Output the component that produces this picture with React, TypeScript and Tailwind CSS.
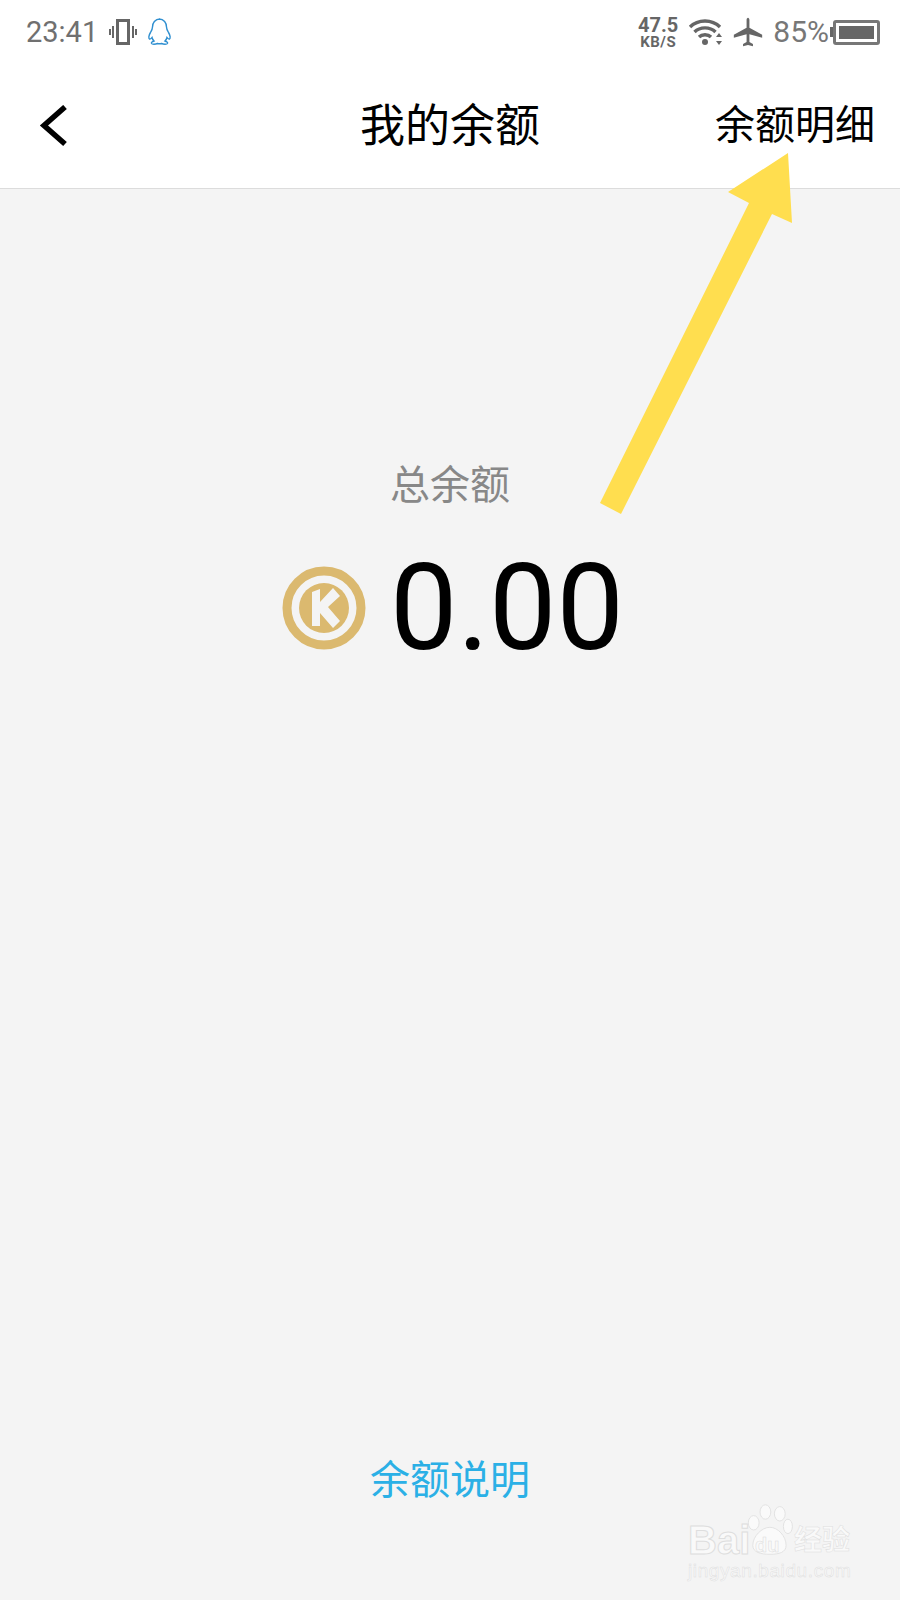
const cjk = "font-['Roboto','Noto_Sans_CJK_SC',sans-serif]";

const StatusBar = () => (
  <div className="h-[64px] flex items-center justify-between pl-[26px] pr-[20px] text-[#6b6b6b]">
    <div className="flex items-center">
      <span className="text-[29px] leading-none font-['Roboto',sans-serif] text-[#707070]">23:41</span>
      <svg width="28" height="26" viewBox="0 0 28 26" className="ml-[11px]" fill="none" stroke="#666">
        <rect x="8.5" y="1.5" width="11" height="23" strokeWidth="3" />
        <path d="M4 7v12M1 10v6M24 7v12M27 10v6" strokeWidth="2" />
      </svg>
      <svg width="26" height="28" viewBox="0 0 26 28" className="ml-[10px]" fill="none" stroke="#2f8fd0" strokeWidth="1.4">
        <path d="M13 1c-5 0-7.500 4-7.500 8 0 2-.5 3-2 5.500-2 3-2 6-1 6.500s2-1 2.500-1.500c.3 1.500 1 2.500 2 3.500-1.500.5-3 1.500-2.500 2.500.5.900 4 .9 6 0 1 .3 3 .3 4 0 2 .9 5.500.9 6 0 .5-1-1-2-2.500-2.500 1-1 1.700-2 2-3.500.5.500 1.500 2 2.500 1.500s1-3.500-1-6.500c-1.500-2.500-2-3.500-2-5.500 0-4-2.500-8-7.500-8z" />
      </svg>
    </div>
    <div className="flex items-center">
      <div className="flex flex-col items-center font-['Roboto',sans-serif] font-bold text-[#666] leading-none">
        <span className="text-[20px] leading-[19px]">47.5</span>
        <span className="text-[15px] leading-[14px] tracking-[0.5px]">KB/S</span>
      </div>
      <svg width="36" height="28" viewBox="0 0 36 28" className="ml-[10px]" fill="none" stroke="#666" strokeWidth="3.400">
        <path d="M2 9c8-8 22-8 30 0M6.500 14c5.500-5.500 15.500-5.500 21 0M11 19c3-3 9-3 12 0" />
        <circle cx="17" cy="24" r="3" fill="#666" stroke="none" />
        <path d="M31 15l-3 4h6zM31 27l-3-4h6z" fill="#666" stroke="none" />
      </svg>
      <svg width="34" height="34" viewBox="0 0 24 24" className="ml-[7px]" fill="#666">
        <path d="M22 16v-2l-9-5V3.500C13 2.700 12.500 2 12 2s-1 .7-1 1.500V9l-9 5v2l9-2.500V19l-2.500 1.500V22l3.500-.8 3.500.8v-1.500L13 19v-5.500l9 2.500z" />
      </svg>
      <span className="ml-[8px] text-[30px] leading-none font-['Roboto',sans-serif] text-[#777]">85%</span>
      <div className="ml-[1px] w-[3px] h-[10px] bg-[#666]" />
      <div className="w-[47px] h-[25px] border-[3px] border-[#777] rounded-[3px] p-[3px] flex">
        <div className="w-full bg-[#666]" />
      </div>
    </div>
  </div>
);

const Header = () => (
  <div className={`relative h-[125px] flex items-center justify-center border-b border-[#dcdcdc] bg-white ${cjk}`}>
    <svg width="32" height="42" viewBox="0 0 32 42" className="absolute left-[38px] top-[41px]" fill="none" stroke="#000" strokeWidth="5.500">
      <path d="M27 2L6 20.500 27 39" />
    </svg>
    <span className="text-[45px] leading-none text-black">我的余额</span>
    <span className="absolute right-[25px] top-[42px] text-[40px] leading-none text-black">余额明细</span>
  </div>
);

const Coin = () => (
  <svg width="84" height="84" viewBox="0 0 84 84">
    <circle cx="42" cy="42" r="37" fill="none" stroke="#dbb96f" strokeWidth="9" />
    <circle cx="42" cy="42" r="25" fill="#dbb96f" />
    <path d="M30 26L38 23V36L51 22L58 30L46 41L58 55L51 62L38 47V60L30 60z" fill="#f4f4f4" />
  </svg>
);

const Watermark = () => (
  <div className="absolute left-[688px] top-[1500px] w-[170px] font-['Liberation_Sans',sans-serif] text-[#f9f9f9]">
    <div className="flex items-end h-[60px] relative">
      <span className="text-[40px] leading-[40px] font-bold [-webkit-text-stroke:1px_#dedede]">Bai</span>
      <svg width="50" height="54" viewBox="0 0 52 60" className="absolute left-[56px] top-[3px]" fill="#fafafa" stroke="#e0e0e0" strokeWidth="1">
        <ellipse cx="22" cy="10" rx="6" ry="8" />
        <ellipse cx="38" cy="12" rx="6" ry="8" />
        <ellipse cx="9" cy="22" rx="6" ry="8" />
        <ellipse cx="47" cy="26" rx="5" ry="8" />
        <path d="M27 27c9 0 18 10 18 20 0 8-8 10-18 10S8 55 8 47c0-10 10-20 19-20z" />
      </svg>
      <span className="absolute left-[67px] top-[35px] text-[20px] leading-none font-bold [-webkit-text-stroke:0.5px_#dcdcdc]">du</span>
      <span className={`absolute left-[106px] top-[27px] text-[28px] leading-none font-bold whitespace-nowrap [-webkit-text-stroke:0.5px_#dedede] ${cjk}`}>经验</span>
    </div>
    <div className="text-[19px] leading-[22px] whitespace-nowrap tracking-[0.6px] [-webkit-text-stroke:0.5px_#dedede]">jingyan.baidu.com</div>
  </div>
);

const App = () => {
  return (
    <div className="relative w-[900px] h-[1600px] overflow-hidden bg-[#f4f4f4] flex flex-col">
      <div className="bg-white">
        <StatusBar />
        <Header />
      </div>
      <div className={`flex-1 flex flex-col items-center ${cjk}`}>
        <div className="mt-[277px] text-[40px] leading-none text-[#888]">总余额</div>
        <div className="mt-[42px] flex items-center translate-x-[3px]">
          <Coin />
          <span className="ml-[24px] text-[120px] leading-[120px] text-black font-['Roboto',sans-serif]">0.00</span>
        </div>
        <div className="mt-auto mb-[99px] text-[40px] leading-none text-[#2bb0e6]">余额说明</div>
      </div>
      {/* annotation arrow drawn over the screenshot */}
      <svg width="900" height="1600" viewBox="0 0 900 1600" className="absolute inset-0 pointer-events-none">
        <polygon points="788,153 728,192 749,203 600,503 621,514 772,214 792,223" fill="#ffde4f" />
      </svg>
      <Watermark />
    </div>
  );
};

export default App;
